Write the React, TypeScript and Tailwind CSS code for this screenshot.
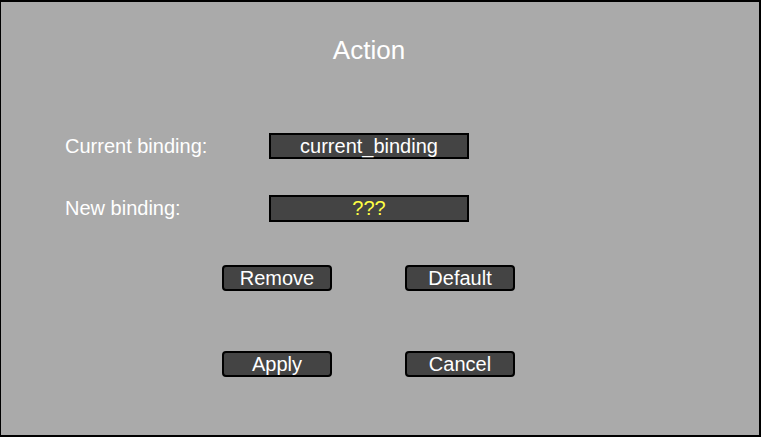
export default function App() {
  const font = { fontFamily: '"Liberation Sans", Arial, sans-serif' };
  return (
    <div
      className="w-[761px] h-[437px] box-border bg-[#aaaaaa] border-black border-t-2 border-l border-r-2 border-b-2 flex flex-col text-white"
      style={font}
    >
      <div className="pt-[33px] h-[63px] box-border">
        <div className="h-[30px] leading-[30px] text-[26px] text-center pr-[22px]">Action</div>
      </div>
      <div className="mt-[68px] flex items-center pl-[64px] h-[26px]">
        <div className="w-[204px] text-[20px] leading-[26px]">Current binding:</div>
        <div className="w-[200px] h-[26px] box-border border-2 border-black bg-[#444444] text-[20px] leading-[22px] text-center">
          current_binding
        </div>
      </div>
      <div className="mt-[36px] flex items-center pl-[64px] h-[27px]">
        <div className="w-[204px] text-[20px] leading-[27px]">New binding:</div>
        <div className="w-[200px] h-[27px] box-border border-2 border-black bg-[#444444] text-[20px] leading-[23px] text-center text-[#ffff44]">
          ???
        </div>
      </div>
      <div className="mt-[43px] flex pl-[221px] gap-[73px]">
        <button className="w-[110px] h-[26px] box-border border-2 border-black rounded-[4px] bg-[#444444] text-[20px] leading-[22px] text-white text-center">
          Remove
        </button>
        <button className="w-[110px] h-[26px] box-border border-2 border-black rounded-[4px] bg-[#444444] text-[20px] leading-[22px] text-white text-center">
          Default
        </button>
      </div>
      <div className="mt-[60px] flex pl-[221px] gap-[73px]">
        <button className="w-[110px] h-[26px] box-border border-2 border-black rounded-[4px] bg-[#444444] text-[20px] leading-[22px] text-white text-center">
          Apply
        </button>
        <button className="w-[110px] h-[26px] box-border border-2 border-black rounded-[4px] bg-[#444444] text-[20px] leading-[22px] text-white text-center">
          Cancel
        </button>
      </div>
    </div>
  );
}
